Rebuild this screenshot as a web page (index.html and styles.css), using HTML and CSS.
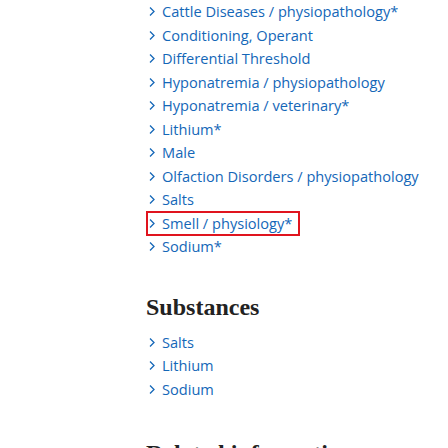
FILE: index.html
```html
<!DOCTYPE html>
<html>
<head>
<meta charset="utf-8">
<link rel="stylesheet" href="styles.css">
</head>
<body>
<main class="content">
  <ul class="links">
    <li><a href="#"><svg class="chev" viewBox="0 0 6 10"><path d="M1 1l4 4-4 4"/></svg><span>Cattle Diseases / physiopathology*</span></a></li>
    <li><a href="#"><svg class="chev" viewBox="0 0 6 10"><path d="M1 1l4 4-4 4"/></svg><span>Conditioning, Operant</span></a></li>
    <li><a href="#"><svg class="chev" viewBox="0 0 6 10"><path d="M1 1l4 4-4 4"/></svg><span>Differential Threshold</span></a></li>
    <li><a href="#"><svg class="chev" viewBox="0 0 6 10"><path d="M1 1l4 4-4 4"/></svg><span>Hyponatremia / physiopathology</span></a></li>
    <li><a href="#"><svg class="chev" viewBox="0 0 6 10"><path d="M1 1l4 4-4 4"/></svg><span>Hyponatremia / veterinary*</span></a></li>
    <li><a href="#"><svg class="chev" viewBox="0 0 6 10"><path d="M1 1l4 4-4 4"/></svg><span>Lithium*</span></a></li>
    <li><a href="#"><svg class="chev" viewBox="0 0 6 10"><path d="M1 1l4 4-4 4"/></svg><span>Male</span></a></li>
    <li><a href="#"><svg class="chev" viewBox="0 0 6 10"><path d="M1 1l4 4-4 4"/></svg><span>Olfaction Disorders / physiopathology</span></a></li>
    <li><a href="#"><svg class="chev" viewBox="0 0 6 10"><path d="M1 1l4 4-4 4"/></svg><span>Salts</span></a></li>
    <li><a href="#" class="focused"><svg class="chev" viewBox="0 0 6 10"><path d="M1 1l4 4-4 4"/></svg><span>Smell / physiology*</span></a></li>
    <li><a href="#"><svg class="chev" viewBox="0 0 6 10"><path d="M1 1l4 4-4 4"/></svg><span>Sodium*</span></a></li>
  </ul>
  <h2 class="heading">Substances</h2>
  <ul class="links">
    <li><a href="#"><svg class="chev" viewBox="0 0 6 10"><path d="M1 1l4 4-4 4"/></svg><span>Salts</span></a></li>
    <li><a href="#"><svg class="chev" viewBox="0 0 6 10"><path d="M1 1l4 4-4 4"/></svg><span>Lithium</span></a></li>
    <li><a href="#"><svg class="chev" viewBox="0 0 6 10"><path d="M1 1l4 4-4 4"/></svg><span>Sodium</span></a></li>
  </ul>
  <h2 class="heading heading-related">Related information</h2>
</main>
</body>
</html>
```
FILE: styles.css
```css
html, body {
  margin: 0;
  padding: 0;
  background: #fff;
}
.content {
  padding: 0 0 0 146px;
  font-family: "Open Sans", "Noto Sans", sans-serif;
}
.links {
  list-style: none;
  margin: 0;
  padding: 0;
}
.links li {
  height: 23.5px;
  display: flex;
  align-items: center;
}
.links a {
  display: inline-flex;
  align-items: center;
  gap: 7px;
  color: #1467b8;
  text-decoration: none;
  font-size: 14.6px;
  line-height: 21px;
  padding: 0 2px 0 2px;
  border: 1px solid transparent;
}
.links a.focused {
  border: 2px solid #e0141e;
  padding: 0 6px 0 1px;
}
.chev {
  width: 6px;
  height: 11px;
  flex: none;
}
.chev path {
  fill: none;
  stroke: #1467b8;
  stroke-width: 1.3;
}
.heading {
  font-family: "Liberation Serif", serif;
  font-weight: bold;
  font-size: 24px;
  color: #222;
  margin: 35px 0 11px 0;
  line-height: 26px;
}
.heading-related {
  margin-top: 39px;
}
```
